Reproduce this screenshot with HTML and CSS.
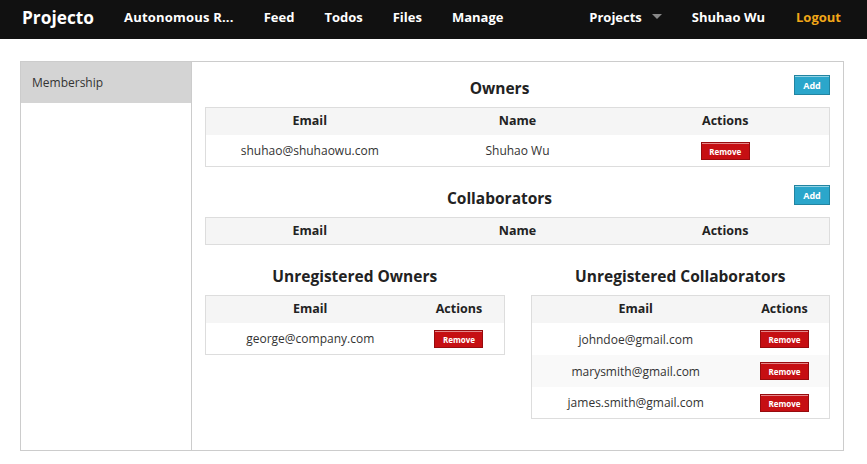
FILE: index.html
```html
<!DOCTYPE html>
<html>
<head>
<meta charset="utf-8">
<link rel="stylesheet" href="styles.css">
</head>
<body>
<nav class="topbar">
  <a class="brand">Projecto</a>
  <ul class="nav-left">
    <li>Autonomous R...</li>
    <li>Feed</li>
    <li>Todos</li>
    <li>Files</li>
    <li>Manage</li>
  </ul>
  <ul class="nav-right">
    <li class="dropdown">Projects <span class="caret"></span></li>
    <li class="user">Shuhao Wu</li>
    <li class="logout">Logout</li>
  </ul>
</nav>

<div class="panel">
  <aside class="sidebar">
    <div class="side-item active">Membership</div>
  </aside>
  <main class="content">
    <section class="block">
      <div class="block-head">
        <h3>Owners</h3>
        <button class="btn-add">Add</button>
      </div>
      <table class="tbl three">
        <thead><tr><th>Email</th><th>Name</th><th>Actions</th></tr></thead>
        <tbody>
          <tr><td>shuhao@shuhaowu.com</td><td>Shuhao Wu</td><td><button class="btn-remove">Remove</button></td></tr>
        </tbody>
      </table>
    </section>

    <section class="block">
      <div class="block-head">
        <h3>Collaborators</h3>
        <button class="btn-add">Add</button>
      </div>
      <table class="tbl three">
        <thead><tr><th>Email</th><th>Name</th><th>Actions</th></tr></thead>
      </table>
    </section>

    <div class="two-col">
      <section class="block sub">
        <h3 class="sub-title">Unregistered Owners</h3>
        <table class="tbl two">
          <thead><tr><th>Email</th><th>Actions</th></tr></thead>
          <tbody>
            <tr><td>george@company.com</td><td><button class="btn-remove">Remove</button></td></tr>
          </tbody>
        </table>
      </section>
      <section class="block sub">
        <h3 class="sub-title">Unregistered Collaborators</h3>
        <table class="tbl two">
          <thead><tr><th>Email</th><th>Actions</th></tr></thead>
          <tbody>
            <tr><td>johndoe@gmail.com</td><td><button class="btn-remove">Remove</button></td></tr>
            <tr><td>marysmith@gmail.com</td><td><button class="btn-remove">Remove</button></td></tr>
            <tr><td>james.smith@gmail.com</td><td><button class="btn-remove">Remove</button></td></tr>
          </tbody>
        </table>
      </section>
    </div>
  </main>
</div>
</body>
</html>
```
FILE: styles.css
```css
* { box-sizing: border-box; }
html, body { margin: 0; padding: 0; background: #fff; }
body {
  font-family: "Open Sans", "DejaVu Sans", sans-serif;
  color: #222;
  font-size: 12px;
}

.topbar {
  height: 39px;
  padding-bottom: 5px;
  background: #111111;
  display: flex;
  align-items: center;
  color: #fff;
  font-weight: 700;
}
.brand {
  font-size: 17.3px;
  padding: 0 15px 0 22px;
  color: #fff;
}
.topbar ul {
  list-style: none;
  margin: 0;
  padding: 0;
  display: flex;
  align-items: center;
  font-size: 13px;
}
.topbar .nav-left li { padding: 0 15px; }
.topbar .nav-left li:first-child { letter-spacing: 0.2px; }
.topbar .nav-right { margin-left: auto; }
.topbar .nav-right li { padding: 0 15px; }
.dropdown { display: flex; align-items: center; }
.caret {
  display: inline-block;
  width: 0; height: 0;
  border-left: 5px solid transparent;
  border-right: 5px solid transparent;
  border-top: 5px solid #888;
  margin-left: 10px;
  margin-top: -2px;
}
.topbar .nav-right .user { padding-right: 31px; }
.topbar .nav-right .logout { color: #f0a618; padding: 0 26px 0 0; }

.panel {
  margin: 22px 23px 0 20px;
  border: 1px solid #ccc;
  display: flex;
  height: 390px;
}
.sidebar {
  width: 171px;
  border-right: 1px solid #ccc;
  flex: none;
}
.side-item {
  height: 41px;
  line-height: 41px;
  padding: 0 11px;
  color: #333;
  font-size: 12px;
}
.side-item.active { background: #d4d4d4; }

.content {
  flex: 1;
  padding: 13px 13px 29px 13px;
}
.block + .block { margin-top: 18px; }
.block-head {
  display: flex;
  align-items: flex-start;
  margin-bottom: 6px;
}
.block-head h3 { flex: 1; }
h3 {
  margin: 0;
  font-size: 15.5px;
  line-height: 26px;
  font-weight: 700;
  text-align: center;
  color: #222;
}
.btn-add {
  flex: none;
  width: 36px;
  height: 20px;
  padding: 0;
  background: #2ba6cb;
  border: 1px solid #2284a1;
  color: #fff;
  font-family: "Open Sans", sans-serif;
  font-weight: 700;
  font-size: 9px;
  box-shadow: inset 0 1px 0 rgba(255,255,255,0.5);
}

.tbl {
  width: 100%;
  border-collapse: collapse;
  border: 1px solid #ddd;
  table-layout: fixed;
}
.tbl th {
  background: #f5f5f5;
  height: 27px;
  font-size: 12.5px;
  font-weight: 700;
  color: #222;
  text-align: center;
  padding: 0 0 1px;
}
.tbl td {
  height: 32px;
  text-align: center;
  font-size: 12px;
  color: #333;
  padding: 1px 0 0;
}
.tbl tbody tr:nth-child(even) td { background: #f9f9f9; }
.three th { width: 33.333%; }
.two th:first-child { width: 70%; }

.btn-remove {
  display: inline-block;
  width: 49px;
  height: 18px;
  padding: 0;
  background: #c60f13;
  border: 1px solid #970b0e;
  color: #fff;
  font-family: "Open Sans", sans-serif;
  font-weight: 700;
  font-size: 8px;
  vertical-align: middle;
  box-shadow: inset 0 1px 0 rgba(255,255,255,0.5);
}

.two-col {
  display: grid;
  grid-template-columns: 1fr 1fr;
  column-gap: 26px;
  margin-top: 18px;
  align-items: start;
}
.two-col .block + .block { margin-top: 0; }
.sub-title { margin-bottom: 6px; }
```
